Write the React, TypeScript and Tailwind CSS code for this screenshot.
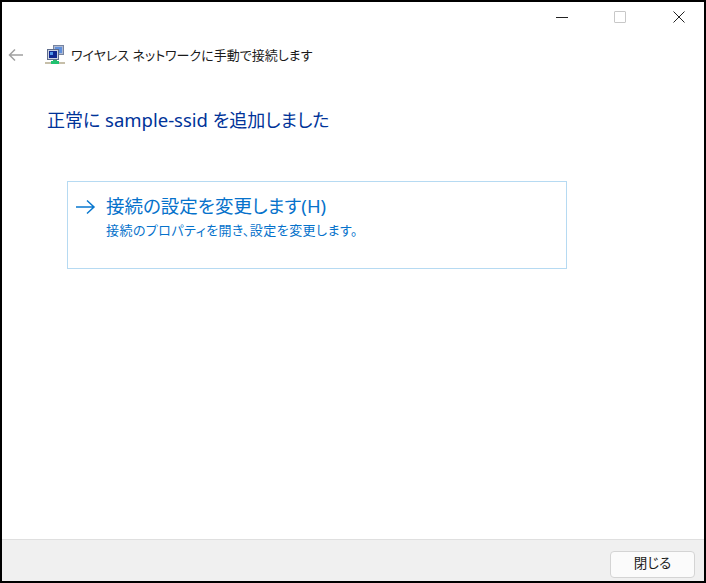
import React from 'react';

const NetworkIcon: React.FC = () => (
  <svg width="20" height="20" viewBox="0 0 20 20" className="shrink-0">
    <rect x="8.5" y="0.5" width="10" height="9" fill="#aeb9d2" stroke="#77849f" />
    <rect x="10" y="2" width="7" height="6" fill="#5f8fdc" />
    <rect x="2.5" y="4.5" width="11" height="10" fill="#cdd4e2" stroke="#5f6d8c" />
    <rect x="4" y="6" width="8" height="7" fill="#10278f" />
    <rect x="5" y="7" width="3" height="3" fill="#4f95ea" />
    <rect x="8" y="15" width="4" height="2" fill="#2fb36a" />
    <rect x="0" y="17" width="20" height="2" fill="#c6bfa9" />
    <rect x="6" y="16" width="8" height="3" fill="#20c271" />
  </svg>
);

export default function App() {
  return (
    <div className="w-[706px] h-[583px] border-2 border-black bg-white flex flex-col font-['Noto_Sans','Noto_Sans_CJK_JP',sans-serif] [font-feature-settings:'palt']">
      <div className="h-[30px] flex justify-end shrink-0">
        <div className="w-[48px] flex items-center justify-center">
          <svg width="12" height="12" viewBox="0 0 12 12"><path d="M0 6.5h12" stroke="#222" strokeWidth="1" /></svg>
        </div>
        <div className="w-[68px] flex items-center justify-center">
          <div className="w-[12px] h-[12px] border border-[#c8c8c8] rounded-[1px]" />
        </div>
        <div className="w-[50px] flex items-center justify-center">
          <svg width="12" height="12" viewBox="0 0 12 12"><path d="M0.5 0.5l11 11M11.5 0.5l-11 11" stroke="#222" strokeWidth="1" /></svg>
        </div>
      </div>

      <div className="h-[46px] flex items-center shrink-0 pl-[6px]">
        <svg width="16" height="14" viewBox="0 0 16 14" className="shrink-0">
          <path d="M15 7H1.5M7 1.5L1.5 7L7 12.5" fill="none" stroke="#a0a0a0" strokeWidth="1.5" />
        </svg>
        <div className="ml-[21px]"><NetworkIcon /></div>
        <span className="ml-[6px] text-[13px] leading-none text-[#1a1a1a] whitespace-nowrap">ワイヤレス ネットワークに手動で接続します</span>
      </div>

      <div className="pl-[45px] pt-[29px] text-[18px] leading-[26px] text-[#003399] whitespace-nowrap shrink-0">
        正常に <span className="text-[18.5px]">sample-ssid</span> を追加しました
      </div>

      <div className="ml-[65px] mt-[48px] w-[500px] h-[88px] border border-[#b6daf2] shrink-0 flex pl-[8px] pt-[12px]">
        <svg width="20" height="16" viewBox="0 0 20 16" className="shrink-0 mt-[5px]">
          <path d="M0 8h18M11 1.5L18 8L11 14.5" fill="none" stroke="#0a78cf" strokeWidth="1.5" />
        </svg>
        <div className="ml-[10px] flex flex-col">
          <span className="text-[18.5px] leading-[24px] text-[#0672cb] whitespace-nowrap">接続の設定を変更します(H)</span>
          <span className="mt-[2px] text-[13px] leading-[20px] tracking-[0.45px] text-[#0672cb] whitespace-nowrap">接続のプロパティを開き、設定を変更します。</span>
        </div>
      </div>

      <div className="flex-1" />

      <div className="h-[42px] shrink-0 bg-[#f0f0f0] border-t border-[#dfdfdf] flex items-center justify-end pr-[9px]">
        <button className="w-[85px] h-[27px] mt-[7px] bg-[#fbfbfb] border border-[#d4d4d4] rounded-[4px] text-[13.5px] leading-none text-[#1a1a1a]">閉じる</button>
      </div>
    </div>
  );
}
